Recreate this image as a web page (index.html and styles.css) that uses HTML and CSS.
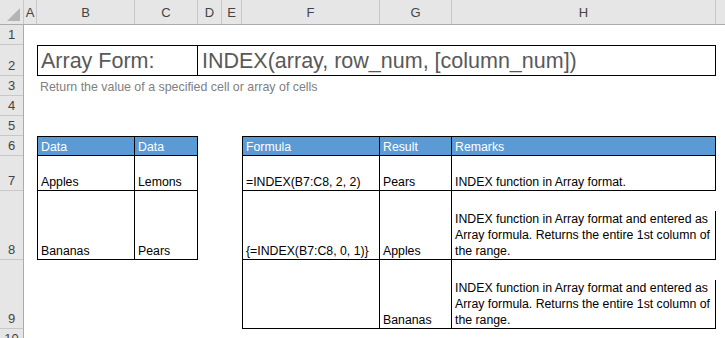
FILE: index.html
```html
<!DOCTYPE html>
<html>
<head>
<meta charset="utf-8">
<link rel="stylesheet" href="styles.css">
</head>
<body>
<div class="app">
  <div class="colhead">
    <div class="corner"><svg width="13" height="13" viewBox="0 0 13 13"><polygon points="13,0 13,13 0,13" fill="#b4b4b4"/></svg></div>
    <div class="ch ca">A</div>
    <div class="ch cb">B</div>
    <div class="ch cc">C</div>
    <div class="ch cd">D</div>
    <div class="ch ce">E</div>
    <div class="ch cf">F</div>
    <div class="ch cg">G</div>
    <div class="ch chh">H</div>
    <div class="ch ci"></div>
  </div>
  <div class="body">
    <div class="rowhead">
      <div class="rh h20">1</div>
      <div class="rh h31">2</div>
      <div class="rh h20">3</div>
      <div class="rh h20">4</div>
      <div class="rh h20">5</div>
      <div class="rh h20">6</div>
      <div class="rh h35">7</div>
      <div class="rh h69">8</div>
      <div class="rh h69">9</div>
      <div class="rh h20">10</div>
    </div>
    <div class="sheet">
      <div class="cell title t1 bx top left">Array Form:</div>
      <div class="cell title t2 bx top">INDEX(array, row_num, [column_num])</div>
      <div class="cell sub">Return the value of a specified cell or array of cells</div>

      <div class="cell hd b6 bx top left">Data</div>
      <div class="cell hd c6 bx top">Data</div>
      <div class="cell b7 bx left">Apples</div>
      <div class="cell c7 bx">Lemons</div>
      <div class="cell b8 bx left">Bananas</div>
      <div class="cell c8 bx">Pears</div>

      <div class="cell hd f6 bx top left">Formula</div>
      <div class="cell hd g6 bx top">Result</div>
      <div class="cell hd h6 bx top">Remarks</div>
      <div class="cell f7 bx left">=INDEX(B7:C8, 2, 2)</div>
      <div class="cell g7 bx">Pears</div>
      <div class="cell h7 bx">INDEX function in Array format.</div>
      <div class="cell f8 bx left">{=INDEX(B7:C8, 0, 1)}</div>
      <div class="cell g8 bx">Apples</div>
      <div class="cell wrap h8 bx">INDEX function in Array format and entered as Array formula. Returns the entire 1st column of the range.</div>
      <div class="cell f9 bx left"></div>
      <div class="cell g9 bx">Bananas</div>
      <div class="cell wrap h9 bx">INDEX function in Array format and entered as Array formula. Returns the entire 1st column of the range.</div>
    </div>
  </div>
</div>
</body>
</html>
```

FILE: styles.css
```css
html, body {
  margin: 0;
  padding: 0;
  background: #ffffff;
  overflow: hidden;
}
body {
  font-family: "Liberation Sans", Arial, sans-serif;
  color: #000;
  width: 725px;
  height: 338px;
}
.app {
  display: flex;
  flex-direction: column;
  width: 725px;
}
.colhead {
  display: flex;
  height: 25px;
  background: #e6e6e6;
  box-sizing: border-box;
  border-bottom: 1px solid #ababab;
}
.corner {
  width: 24px;
  box-sizing: border-box;
  border-right: 1px solid #c8c8c8;
  display: flex;
  align-items: flex-end;
  justify-content: flex-end;
  padding: 0 3px 3px 0;
}
.ch {
  box-sizing: border-box;
  border-right: 1px solid #c8c8c8;
  display: flex;
  align-items: center;
  justify-content: center;
  font-size: 13px;
  color: #444;
  padding-top: 1px;
}
.ca { width: 13px; }
.cb { width: 98px; }
.cc { width: 63px; }
.cd { width: 24px; }
.ce { width: 20px; }
.cf { width: 138px; }
.cg { width: 72px; }
.chh { width: 264px; }
.ci { flex: 1; border-right: none; }

.body {
  display: flex;
}
.rowhead {
  width: 24px;
  display: flex;
  flex-direction: column;
  background: #e6e6e6;
  box-sizing: border-box;
  border-right: 1px solid #ababab;
  flex: none;
}
.rh {
  box-sizing: border-box;
  border-bottom: 1px solid #c8c8c8;
  display: flex;
  align-items: flex-end;
  justify-content: center;
  font-size: 13px;
  color: #444;
  padding-bottom: 2px;
}
.h20 { height: 20px; }
.h31 { height: 31px; }
.h35 { height: 35px; }
.h69 { height: 69px; }

.sheet {
  flex: 1;
  display: grid;
  grid-template-columns: 13px 98px 63px 24px 20px 138px 72px 264px 1fr;
  grid-template-rows: 20px 31px 20px 20px 20px 20px 35px 69px 69px 20px;
}
.cell {
  box-sizing: border-box;
  display: flex;
  align-items: flex-end;
  padding: 0 2px 0 3px;
  font-size: 12.3px;
  line-height: 16px;
  white-space: nowrap;
  min-width: 0;
}
.wrap {
  white-space: normal;
  display: block;
  align-self: end;
  height: auto;
}
.bx {
  border-right: 1px solid #000;
  border-bottom: 1px solid #000;
}
.top { border-top: 1px solid #000; }
.left { border-left: 1px solid #000; }

.title {
  font-size: 21.5px;
  line-height: 26px;
  color: #595959;
  padding-bottom: 1px;
}
.t1 { grid-column: 2 / 4; grid-row: 2; }
.t2 { grid-column: 4 / 9; grid-row: 2; padding-left: 4px; }
.sub {
  grid-column: 2 / 9;
  grid-row: 3;
  font-size: 12.4px;
  color: #808080;
  padding-bottom: 1px;
}
.hd {
  background: #5b9bd5;
  color: #ffffff;
}
.b6 { grid-column: 2; grid-row: 6; }
.c6 { grid-column: 3; grid-row: 6; }
.b7 { grid-column: 2; grid-row: 7; }
.c7 { grid-column: 3; grid-row: 7; }
.b8 { grid-column: 2; grid-row: 8; }
.c8 { grid-column: 3; grid-row: 8; }
.f6 { grid-column: 6; grid-row: 6; }
.g6 { grid-column: 7; grid-row: 6; }
.h6 { grid-column: 8; grid-row: 6; }
.f7 { grid-column: 6; grid-row: 7; }
.g7 { grid-column: 7; grid-row: 7; }
.h7 { grid-column: 8; grid-row: 7; }
.f8 { grid-column: 6; grid-row: 8; }
.g8 { grid-column: 7; grid-row: 8; }
.h8 { grid-column: 8; grid-row: 8; }
.f9 { grid-column: 6; grid-row: 9; }
.g9 { grid-column: 7; grid-row: 9; }
.h9 { grid-column: 8; grid-row: 9; }
```
